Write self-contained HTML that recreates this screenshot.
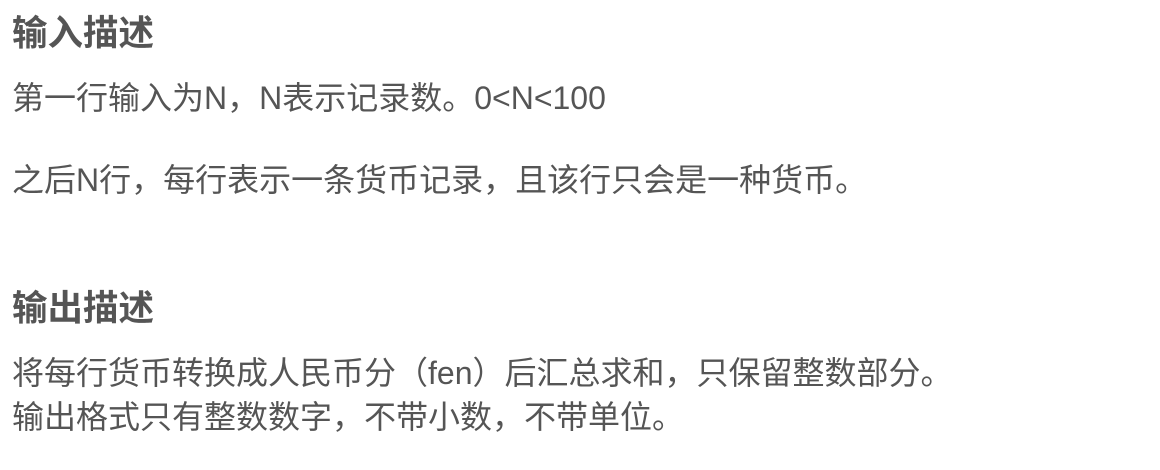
<!DOCTYPE html>
<html><head><meta charset="utf-8"><style>
html,body{margin:0;padding:0;background:#fff;width:1160px;height:470px;overflow:hidden}
body{font-family:"Liberation Sans","Noto Sans CJK SC",sans-serif;color:#555;position:relative}
div{position:absolute;left:12px;white-space:nowrap;line-height:44px}
.h{font-size:35.5px;font-weight:bold;color:#555}
.p{font-size:32px}
</style></head><body>
<div class="h" style="top:11px">输入描述</div>
<div class="p" style="top:76px">第一行输入为N，N表示记录数。0&lt;N&lt;100</div>
<div class="p" style="top:158px">之后N行，每行表示一条货币记录，且该行只会是一种货币。</div>
<div class="h" style="top:286px">输出描述</div>
<div class="p" style="top:351px">将每行货币转换成人民币分（fen）后汇总求和，只保留整数部分。</div>
<div class="p" style="top:395px">输出格式只有整数数字，不带小数，不带单位。</div>
</body></html>
